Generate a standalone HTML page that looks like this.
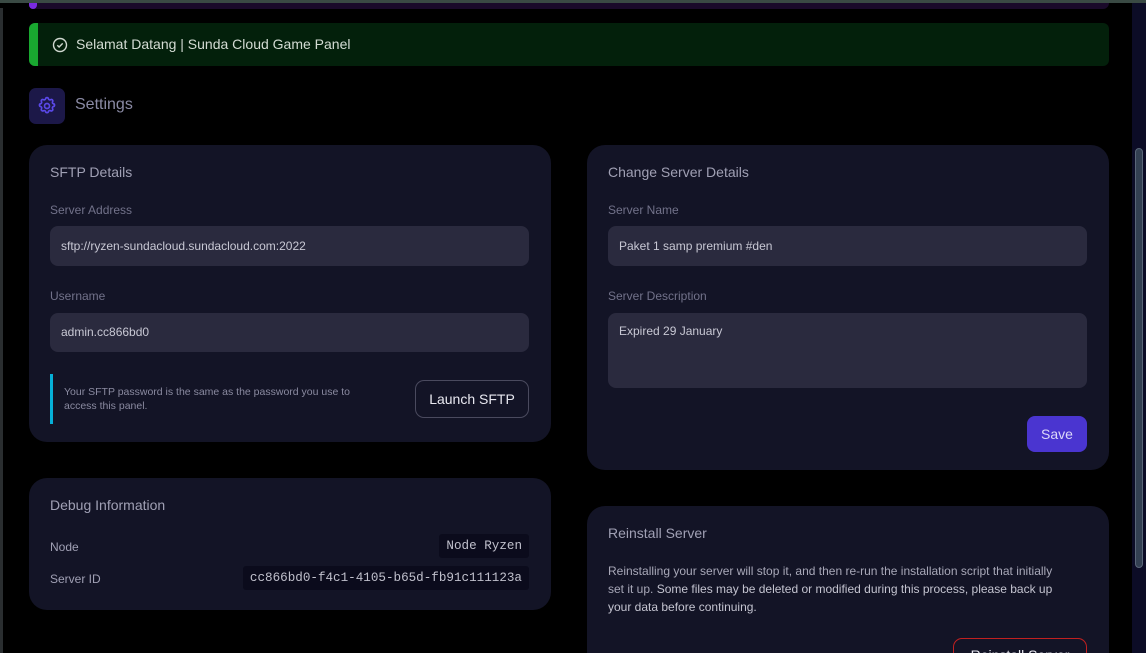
<!DOCTYPE html>
<html style="width:1146px;height:653px;overflow:hidden"><head><meta charset="utf-8"><style>
*{box-sizing:border-box;margin:0;padding:0}
body{width:1146px;height:653px;background:#000;font-family:"Liberation Sans",sans-serif;overflow:hidden;position:relative;color:#c8c8d4}
.a{position:absolute}
.card{position:absolute;background:#131426;border-radius:18px}
.t{position:absolute;font-size:14px;color:#a0a0b4}
.l{position:absolute;font-size:12px;color:#72728a}
.in{position:absolute;background:#2a2a3e;border-radius:8px;font-size:12px;color:#c8c8d4;padding-left:11px}
.mono{font-family:"Liberation Mono",monospace;font-size:12.6px;color:#c0c0cc;background:#0b0b1c;border-radius:3px;position:absolute;padding:0 7px;line-height:24px;white-space:nowrap}
</style></head><body>
<div class="a" style="left:0;top:0;width:1146px;height:3px;background:#3a4a44"></div>
<div class="a" style="left:29px;top:3px;width:1080px;height:6px;background:#1a0a2a;border-radius:0 0 6px 6px"></div>
<div class="a" style="left:29px;top:3px;width:8px;height:6px;background:#7a2ae0;border-radius:0 0 4px 4px"></div>
<div class="a" style="left:0;top:8px;width:3px;height:645px;background:#2a2e30"></div>
<div class="a" style="left:1132px;top:3px;width:14px;height:650px;background:#0c0c26"></div>
<div class="a" style="left:1135px;top:148px;width:8px;height:420px;background:#334052;border:1px solid #5a6678;border-radius:4px"></div>

<div class="a" style="left:29px;top:23px;width:1080px;height:43px;background:#03200b;border-radius:6px;overflow:hidden"><div style="width:9px;height:100%;background:#19a830"></div></div>
<svg class="a" style="left:52px;top:37px" width="16" height="16" viewBox="0 0 16 16"><circle cx="8" cy="8" r="6.5" fill="none" stroke="#d0d8d0" stroke-width="1.4"/><path d="M5.3 8.2l1.8 1.8 3.6-3.6" fill="none" stroke="#d0d8d0" stroke-width="1.4"/></svg>
<div class="a" style="left:76px;top:36px;font-size:14px;color:#d4dcd4">Selamat Datang | Sunda Cloud Game Panel</div>

<div class="a" style="left:29px;top:88px;width:36px;height:36px;background:#1c1848;border-radius:7px"></div>
<svg class="a" style="left:37px;top:96px" width="20" height="20" viewBox="0 0 24 24" fill="none" stroke="#5a48e8" stroke-width="2"><path d="M10.3 3.3c.4-1.8 3-1.8 3.4 0a1.7 1.7 0 002.6 1.1c1.5-.9 3.3.8 2.4 2.4a1.7 1.7 0 001 2.5c1.8.4 1.8 3 0 3.4a1.7 1.7 0 00-1 2.6c.9 1.5-.9 3.3-2.4 2.4a1.7 1.7 0 00-2.6 1c-.4 1.8-3 1.8-3.4 0a1.7 1.7 0 00-2.5-1c-1.6.9-3.3-.9-2.4-2.4a1.7 1.7 0 00-1.1-2.6c-1.8-.4-1.8-3 0-3.4a1.7 1.7 0 001.1-2.5c-.9-1.6.8-3.3 2.4-2.4a1.7 1.7 0 002.5-1.1z"/><circle cx="12" cy="12" r="3"/></svg>
<div class="a" style="left:75px;top:96px;font-size:16px;color:#8a8aa4">Settings</div>

<div class="card" style="left:29px;top:145px;width:522px;height:297px"></div>
<div class="t" style="left:50px;top:164px">SFTP Details</div>
<div class="l" style="left:50px;top:203px">Server Address</div>
<div class="in" style="left:50px;top:226px;width:479px;height:40px;line-height:40px">sftp://ryzen-sundacloud.sundacloud.com:2022</div>
<div class="l" style="left:50px;top:289px">Username</div>
<div class="in" style="left:50px;top:313px;width:479px;height:39px;line-height:39px">admin.cc866bd0</div>
<div class="a" style="left:50px;top:374px;width:3px;height:50px;background:#06b0d8"></div>
<div class="a" style="left:64px;top:385px;font-size:10.5px;line-height:14px;color:#8a8aa0;width:320px">Your SFTP password is the same as the password you use to access this panel.</div>
<div class="a" style="left:415px;top:380px;width:114px;height:38px;border:1px solid #4a4a5e;border-radius:9px;color:#e8e8f0;font-size:14px;text-align:center;line-height:36px">Launch SFTP</div>

<div class="card" style="left:29px;top:478px;width:522px;height:132px"></div>
<div class="t" style="left:50px;top:497px">Debug Information</div>
<div class="l" style="left:50px;top:540px;color:#a0a0b4">Node</div>
<div class="mono" style="right:617px;top:534px">Node Ryzen</div>
<div class="l" style="left:50px;top:572px;color:#a0a0b4">Server ID</div>
<div class="mono" style="right:617px;top:566px">cc866bd0-f4c1-4105-b65d-fb91c111123a</div>

<div class="card" style="left:587px;top:145px;width:522px;height:325px"></div>
<div class="t" style="left:608px;top:164px">Change Server Details</div>
<div class="l" style="left:608px;top:203px">Server Name</div>
<div class="in" style="left:608px;top:226px;width:479px;height:40px;line-height:40px">Paket 1 samp premium #den</div>
<div class="l" style="left:608px;top:289px">Server Description</div>
<div class="in" style="left:608px;top:313px;width:479px;height:75px;padding-top:11px">Expired 29 January</div>
<div class="a" style="left:1027px;top:416px;width:60px;height:36px;background:#4a35d0;border-radius:8px;color:#dcd8f8;font-size:14px;text-align:center;line-height:36px">Save</div>

<div class="card" style="left:587px;top:506px;width:522px;height:170px"></div>
<div class="t" style="left:608px;top:525px">Reinstall Server</div>
<div class="a" style="left:608px;top:562px;width:455px;font-size:12px;line-height:18px;color:#a8a8b8">Reinstalling your server will stop it, and then re-run the installation script that initially set it up. <span style="color:#c4c4d0">Some files may be deleted or modified during this process, please back up your data before continuing.</span></div>
<div class="a" style="left:953px;top:638px;width:134px;height:36px;border:1px solid #c02020;border-radius:9px;color:#e8e8f0;font-size:14px;text-align:center;line-height:32px">Reinstall Server</div>
</body></html>
